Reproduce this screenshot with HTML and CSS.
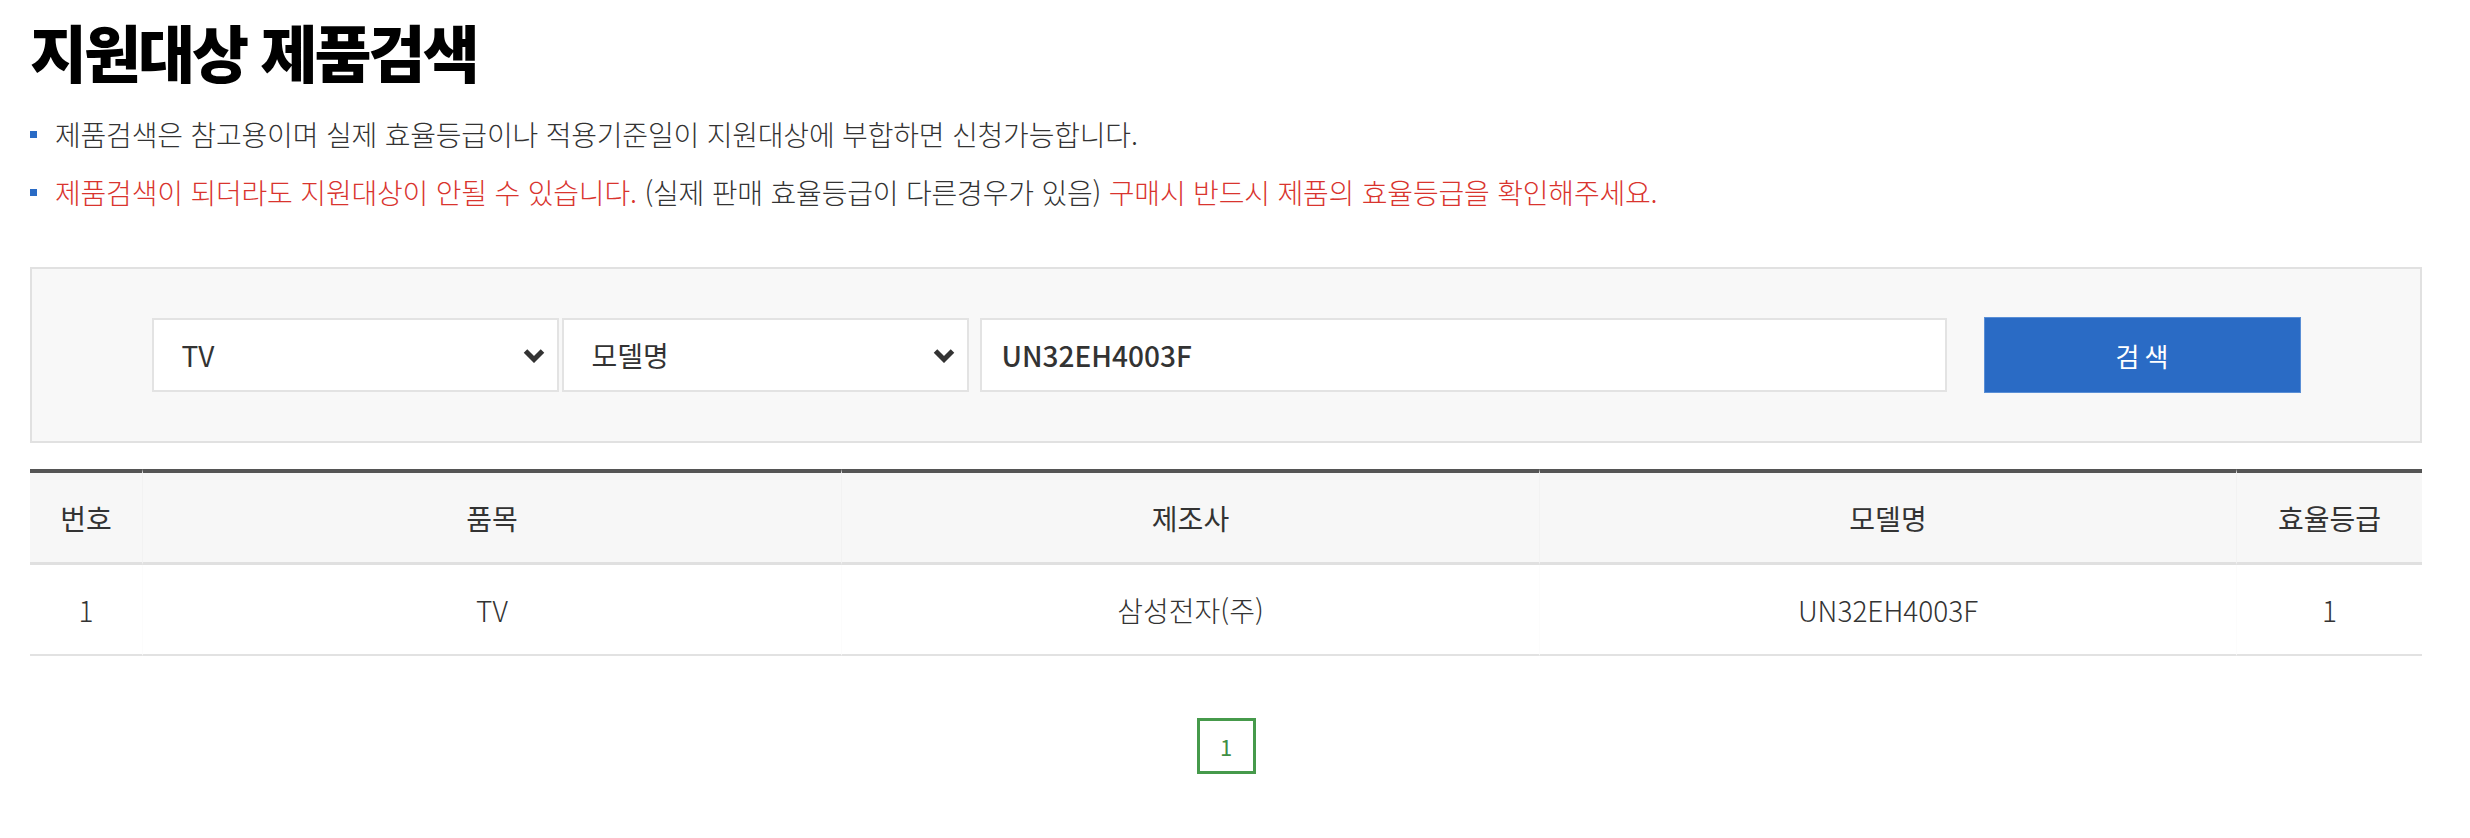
FILE: index.html
```html
<!DOCTYPE html>
<html lang="ko">
<head>
<meta charset="utf-8">
<title>지원대상 제품검색</title>
<link rel="stylesheet" href="styles.css">
</head>
<body>
<div class="page">
  <h1 class="title">지원대상 제품검색</h1>
  <ul class="notes">
    <li class="note">제품검색은 참고용이며 실제 효율등급이나 적용기준일이 지원대상에 부합하면 신청가능합니다.</li>
    <li class="note"><span class="red">제품검색이 되더라도 지원대상이 안될 수 있습니다.</span> (실제 판매 효율등급이 다른경우가 있음) <span class="red">구매시 반드시 제품의 효율등급을 확인해주세요.</span></li>
  </ul>

  <div class="search">
    <div class="search-inner">
      <div class="select sel1">
        <span class="sel-text">TV</span>
        <svg class="chev" viewBox="0 0 22 15" width="22" height="15"><path d="M2.5 3 L11 11.5 L19.5 3" fill="none" stroke="#333" stroke-width="5" stroke-linecap="butt" stroke-linejoin="miter"/></svg>
      </div>
      <div class="select sel2">
        <span class="sel-text">모델명</span>
        <svg class="chev" viewBox="0 0 22 15" width="22" height="15"><path d="M2.5 3 L11 11.5 L19.5 3" fill="none" stroke="#333" stroke-width="5" stroke-linecap="butt" stroke-linejoin="miter"/></svg>
      </div>
      <div class="input"><span class="input-text">UN32EH4003F</span></div>
      <button class="btn">검색</button>
    </div>
  </div>

  <table class="list">
    <colgroup>
      <col class="c1"><col class="c2"><col class="c3"><col class="c4"><col class="c5">
    </colgroup>
    <thead>
      <tr><th>번호</th><th>품목</th><th>제조사</th><th>모델명</th><th>효율등급</th></tr>
    </thead>
    <tbody>
      <tr><td>1</td><td>TV</td><td>삼성전자(주)</td><td>UN32EH4003F</td><td>1</td></tr>
    </tbody>
  </table>

  <div class="paging"><span class="pg on">1</span></div>
</div>
</body>
</html>
```

FILE: styles.css
```css
* { box-sizing: border-box; }
html, body { margin: 0; padding: 0; background: #fff; }
body {
  font-family: "Noto Sans CJK KR", "Noto Sans", sans-serif;
  color: #333;
}
.page {
  padding: 0 48px 0 30px;
}
.title {
  margin: 0;
  padding-top: 6px;
  font-size: 62px;
  font-weight: 900;
  line-height: 90px;
  letter-spacing: -3px;
  color: #000;
}
.notes {
  list-style: none;
  margin: 0;
  padding: 0;
  margin-top: 9px;
}
.note {
  position: relative;
  padding-left: 25px;
  font-size: 28px;
  line-height: 58px;
  font-weight: 300;
  color: #333;
  letter-spacing: -0.2px;
}
.note::before {
  content: "";
  position: absolute;
  left: 0;
  top: 26px;
  width: 7px;
  height: 7px;
  background: #2a6bc5;
}
.red { color: #d9342e; }

.search {
  margin-top: 46px;
  border: 2px solid #e1e1e1;
  background: #f8f8f8;
  padding: 48px 0;
  display: flex;
  justify-content: center;
}
.search-inner {
  display: flex;
  align-items: center;
}
.select {
  width: 407px;
  height: 74px;
  border: 2px solid #e3e3e3;
  background: #fff;
  display: flex;
  align-items: center;
  justify-content: space-between;
  padding: 0 12px 0 28px;
}
.sel2 { margin-left: 3px; }
.sel-text {
  font-size: 28px;
  color: #333;
  font-weight: 400;
}
.chev { display: block; margin-top: 1px; }
.input {
  margin-left: 11px;
  width: 967px;
  height: 74px;
  border: 2px solid #e3e3e3;
  background: #fff;
  display: flex;
  align-items: center;
  padding-left: 20px;
}
.input-text {
  font-size: 28px;
  font-weight: 500;
  color: #333;
}
.btn {
  margin-left: 37px;
  width: 317px;
  height: 76px;
  border: 1px solid #5a8fd6;
  background: #2a6bc5;
  color: #fff;
  font-family: "Noto Sans CJK KR", "Noto Sans", sans-serif;
  font-size: 26px;
  font-weight: 400;
  letter-spacing: 5px;
  padding: 0 0 0 5px;
}

.list {
  margin-top: 26px;
  width: 100%;
  border-collapse: separate;
  border-spacing: 0;
  table-layout: fixed;
}
.c1 { width: 112px; }
.c2 { width: 699px; }
.c3 { width: 698px; }
.c4 { width: 697px; }
.list th {
  height: 96px;
  border-top: 4px solid #555;
  border-bottom: 3px solid #e0e0e0;
  background: #f7f7f7;
  font-size: 28px;
  font-weight: 400;
  color: #333;
  text-align: center;
  padding: 0;
}
.list td {
  height: 91px;
  border-bottom: 2px solid #e2e2e2;
  font-size: 28px;
  font-weight: 300;
  color: #333;
  text-align: center;
  padding: 0;
}
.list th + th { border-left: 1px solid #f2f2f2; }
.list td + td { border-left: 1px solid #fcfcfc; }

.paging {
  margin-top: 62px;
  display: flex;
  justify-content: center;
}
.pg {
  width: 59px;
  height: 56px;
  border: 3px solid #469a4b;
  color: #3f8f44;
  font-size: 22px;
  display: flex;
  align-items: center;
  justify-content: center;
}
```
